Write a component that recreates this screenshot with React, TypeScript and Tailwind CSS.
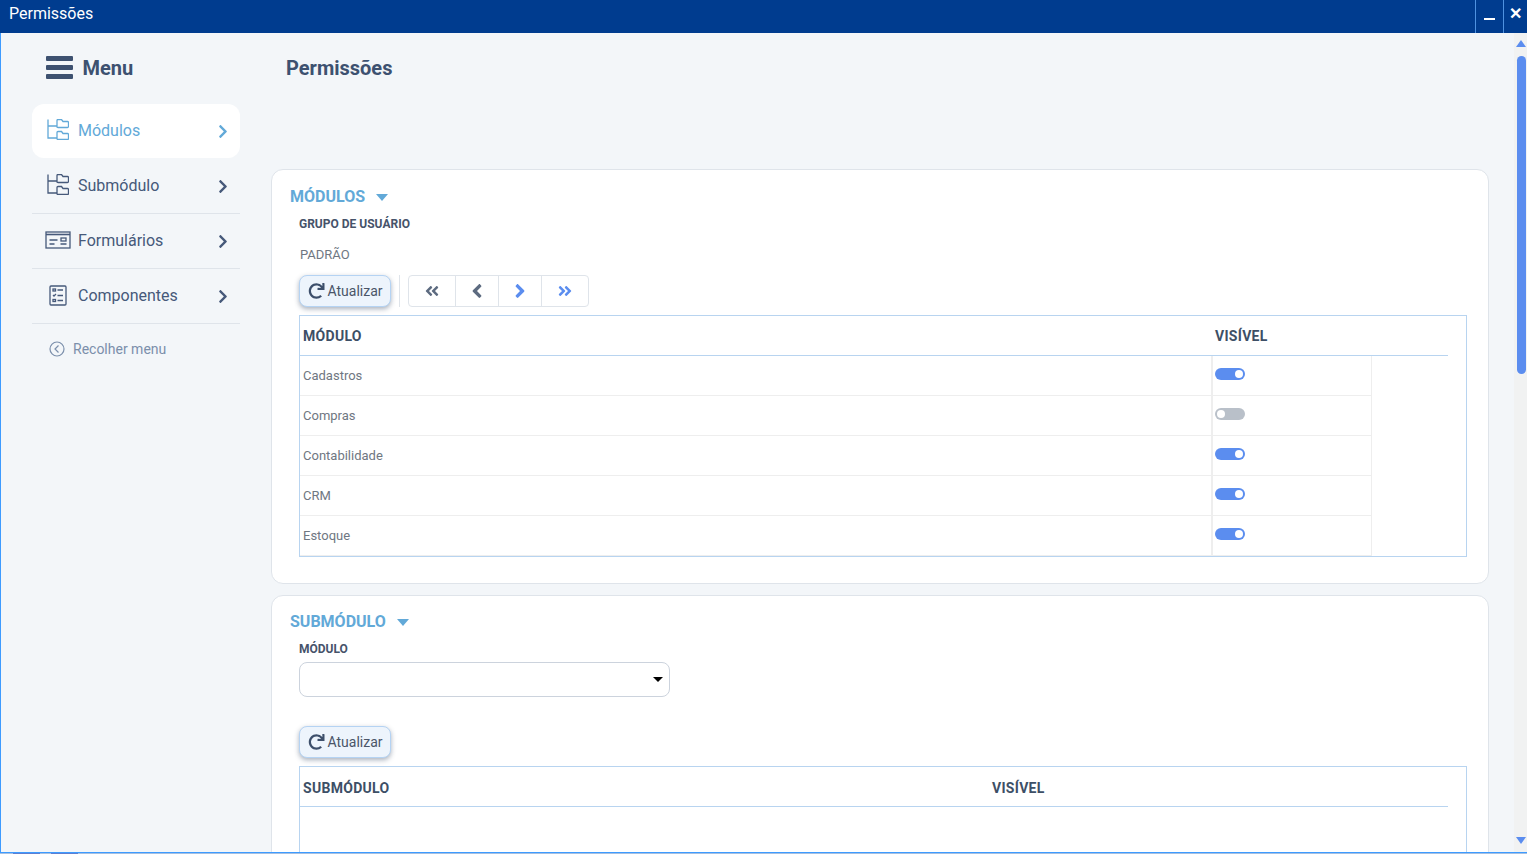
import { FaAngleDoubleLeft, FaAngleDoubleRight, FaAngleLeft, FaAngleRight, FaChevronRight, FaRedo } from "react-icons/fa";

const modules = [
  { name: "Cadastros", on: true },
  { name: "Compras", on: false },
  { name: "Contabilidade", on: true },
  { name: "CRM", on: true },
  { name: "Estoque", on: true },
];

function FolderTreeIcon() {
  return (
    <svg className="mb-[3px]" width="22" height="21" viewBox="0 0 22 21" fill="none" stroke="currentColor" strokeWidth="1.3">
      <path d="M1 0.500v18.500h9M1 7h9" />
      <path d="M10 8.500v-7q0-1 1-1h3.500l1.500 2h4.500q1 0 1 1v4q0 1-1 1h-9.500q-1 0-1-1z" />
      <path d="M10 19.500v-6q0-1 1-1h3.500l1.500 2h4.500q1 0 1 1v4q0 1-1 1h-9.500q-1 0-1-1z" />
    </svg>
  );
}

function FormIcon() {
  return (
    <svg className="mb-[3px]" width="26" height="18" viewBox="0 0 26 18" fill="none" stroke="currentColor" strokeWidth="1.3">
      <rect x="1" y="1" width="24" height="16" />
      <path d="M1 3.500h24" strokeWidth="1.600" />
      <path d="M4.500 9h8M4.500 13h5M15.500 13h6" />
      <rect x="16" y="7" width="5" height="3" />
    </svg>
  );
}

function ChecklistIcon() {
  return (
    <svg className="mb-[2px] mr-[1px]" width="18" height="21" viewBox="0 0 18 21" fill="none" stroke="currentColor" strokeWidth="1.3">
      <rect x="1" y="1" width="16" height="19" rx="1" />
      <rect x="4" y="4" width="2.500" height="2" />
      <path d="M8.500 5h5.500M4 10l1 1 2-2M8.500 10.500h5.500M8.500 15.500h5.500" />
      <rect x="4" y="14.500" width="2.500" height="2" />
    </svg>
  );
}

function SideItem({ label, icon, active, line }: { label: string; icon: React.ReactNode; active?: boolean; line?: boolean }) {
  return (
    <div
      className={`flex items-center pr-[11px] text-[16px] ${
        active ? "mb-px h-[54px] rounded-xl bg-white text-[#62a9d8]" : "h-[55px] text-[#46597a]"
      } ${line ? "border-b border-[#dfe4ea]" : ""}`}
    >
      <span className="flex w-[46px] shrink-0 justify-center pl-[6px]">{icon}</span>
      <span className="flex-1">{label}</span>
      <FaChevronRight className="h-[15px] w-[12px]" />
    </div>
  );
}

function RefreshButton() {
  return (
    <button className="flex h-[32px] w-[92px] items-center gap-[2.500px] rounded-lg border border-[#b5d3f3] bg-[#edf4fc] pl-2 text-[14px] text-[#4a5568] shadow-[0_2px_5px_rgba(40,60,90,0.4)]">
      <FaRedo className="h-[16px] w-[17px] text-[#3d4f6b]" />
      Atualizar
    </button>
  );
}

function SectionTitle({ children }: { children: string }) {
  return (
    <div className="flex h-[20px] items-center gap-[11px] text-[16px] font-bold text-[#62a9d8]">
      {children}
      <span className="h-0 w-0 border-x-[6.500px] border-t-[7px] border-x-transparent border-t-[#62a9d8]" />
    </div>
  );
}

export default function App() {
  return (
    <div className="flex h-[854px] w-full flex-col overflow-hidden bg-[#f3f6f9] font-['Roboto',sans-serif]">
      <header className="flex h-[33px] shrink-0 bg-[#003c8f] text-white">
        <div className="flex-1 pl-[9px] text-[16px] leading-[27px]">Permissões</div>
        <div className="flex w-[28px] items-end justify-center border-l border-[#4f92e0] pb-[13px] pr-[1px]">
          <span className="h-[2px] w-[11px] bg-white" />
        </div>
        <div className="flex w-[24px] justify-center border-l border-[#4f92e0] pt-[6px] text-[16px] font-bold leading-[16px]">
          ✕
        </div>
      </header>

      <div className="flex min-h-0 flex-1 border-l border-[#3d9bff]">
        <aside className="w-[270px] shrink-0 pl-[31px] pr-[31px]">
          <div className="mb-[2px] flex h-[69px] items-center pl-[14px] text-[20px] font-bold text-[#3d5170]">
            <div className="mr-[9.500px] flex w-[27px] flex-col gap-[4px]">
              <span className="h-[5px] rounded-[1px] bg-[#3d5170]" />
              <span className="h-[5px] rounded-[1px] bg-[#3d5170]" />
              <span className="h-[5px] rounded-[1px] bg-[#3d5170]" />
            </div>
            Menu
          </div>
          <SideItem label="Módulos" icon={<FolderTreeIcon />} active />
          <SideItem label="Submódulo" icon={<FolderTreeIcon />} line />
          <SideItem label="Formulários" icon={<FormIcon />} line />
          <SideItem label="Componentes" icon={<ChecklistIcon />} line />
          <div className="flex h-[50px] items-center pl-[17px] text-[14px] text-[#7b8fab]">
            <svg className="mr-2 h-[16px] w-[16px]" viewBox="0 0 16 16" fill="none" stroke="currentColor" strokeWidth="1.2">
              <circle cx="8" cy="8" r="7" />
              <path d="M9.500 4.500 6 8l3.500 3.500" />
            </svg>
            Recolher menu
          </div>
        </aside>

        <main className="min-w-0 flex-1 overflow-hidden pr-[25px]">
          <h1 className="flex h-[69px] items-center pl-[15px] text-[20px] font-bold text-[#3d5170]">Permissões</h1>

          <section className="mt-[67px] h-[415px] rounded-xl border border-[#dfe4ea] bg-white pl-[18px] pr-[21px] pt-[17px]">
            <SectionTitle>MÓDULOS</SectionTitle>
            <div className="pl-[9px]">
              <div className="mt-[10px] text-[12px] font-bold leading-[14px] text-[#46536a]">GRUPO DE USUÁRIO</div>
              <div className="mt-[16px] pl-px text-[13px] leading-[16px] text-[#6f7782]">PADRÃO</div>
              <div className="mt-[12px] flex items-center">
                <RefreshButton />
                <span className="mx-2 h-[32px] w-px bg-[#dfe4ea]" />
                <div className="flex h-[32px] rounded border border-[#dfe4ea] text-[#5d6b80]">
                  <span className="flex w-[47px] items-center justify-center border-r border-[#dfe4ea]">
                    <FaAngleDoubleLeft className="h-[16px] w-[16px]" />
                  </span>
                  <span className="flex w-[43px] items-center justify-center border-r border-[#dfe4ea]">
                    <FaAngleLeft className="h-[22px] w-[22px]" />
                  </span>
                  <span className="flex w-[43px] items-center justify-center border-r border-[#dfe4ea] text-[#5b8def]">
                    <FaAngleRight className="h-[22px] w-[22px]" />
                  </span>
                  <span className="flex w-[46px] items-center justify-center text-[#5b8def]">
                    <FaAngleDoubleRight className="h-[16px] w-[16px]" />
                  </span>
                </div>
              </div>

              <div className="mt-[8px] h-[242px] border border-[#b8d4f0]">
                <div className="mr-[18px] flex h-[40px] items-center border-b border-[#b8d4f0] pt-[1px] text-[14px] font-bold tracking-[0.3px] text-[#3d4f66]">
                  <span className="w-[915px] pl-[3px]">MÓDULO</span>
                  <span>VISÍVEL</span>
                </div>
                {modules.map((mod) => (
                  <div key={mod.name} className="mr-[94px] flex h-[40px] border-b border-[#eeeeee] text-[13px] text-[#6f7782]">
                    <div className="flex w-[911px] items-center pl-[3px] pt-px">{mod.name}</div>
                    <div className="flex flex-1 border-x border-l-2 border-[#eeeeee] pl-[2px] pt-[12px]">
                      <span
                        className={`flex h-[12px] w-[30px] items-center rounded-full px-[2px] ${
                          mod.on ? "justify-end bg-[#5b8def]" : "bg-[#b9c0c9]"
                        }`}
                      >
                        <span className="h-[8px] w-[8px] rounded-full bg-white" />
                      </span>
                    </div>
                  </div>
                ))}
              </div>
            </div>
          </section>

          <section className="mt-[11px] h-[400px] rounded-xl border border-[#dfe4ea] bg-white pl-[18px] pr-[21px] pt-[16px]">
            <SectionTitle>SUBMÓDULO</SectionTitle>
            <div className="pl-[9px]">
              <div className="mt-[10px] text-[12px] font-bold leading-[14px] text-[#46536a]">MÓDULO</div>
              <div className="mt-[6px] flex h-[35px] w-[371px] items-center justify-end rounded-lg border border-[#ccd3dd] pr-[6px]">
                <span className="h-0 w-0 border-x-[5px] border-t-[5px] border-x-transparent border-t-black" />
              </div>
              <div className="mt-[29px]">
                <RefreshButton />
              </div>
              <div className="mt-[8px] h-[200px] border border-[#b8d4f0]">
                <div className="mr-[18px] flex h-[40px] items-center border-b border-[#b8d4f0] pt-[3px] text-[14px] font-bold tracking-[0.3px] text-[#3d4f66]">
                  <span className="w-[692px] pl-[3px]">SUBMÓDULO</span>
                  <span>VISÍVEL</span>
                </div>
              </div>
            </div>
          </section>
        </main>

        <div className="relative w-[13px] shrink-0 bg-[#f1f2f2]">
          <span className="absolute left-[2px] top-[7px] h-0 w-0 border-x-[5px] border-b-[7px] border-x-transparent border-b-[#5b8def]" />
          <span className="absolute left-[3px] top-[23px] h-[318px] w-[9px] rounded-full bg-[#5b8def]" />
          <span className="absolute bottom-[8px] left-[2px] h-0 w-0 border-x-[5px] border-t-[7px] border-x-transparent border-t-[#5b8def]" />
        </div>
      </div>

      <div className="h-px shrink-0 bg-[#3d9bff]" />
      <div className="flex h-px shrink-0 bg-[#a5c0e2] pl-[13px]">
        <span className="w-[27px] bg-[#5f7fd0]" />
        <span className="ml-[11px] w-[27px] bg-[#5f7fd0]" />
      </div>
    </div>
  );
}
